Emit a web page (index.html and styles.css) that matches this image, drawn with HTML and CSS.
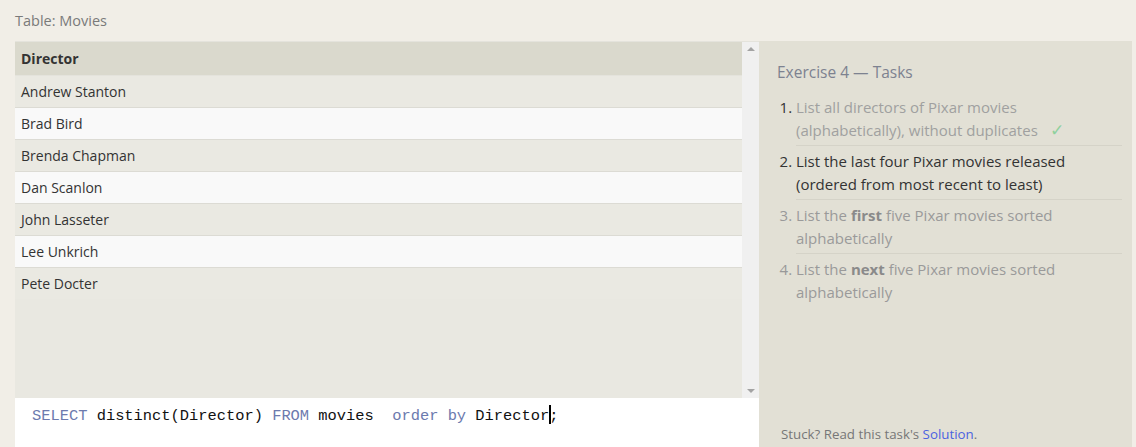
FILE: index.html
```html
<!DOCTYPE html>
<html>
<head>
<meta charset="utf-8">
<link rel="stylesheet" href="styles.css">
</head>
<body>
<div class="page">
  <div class="caption">Table: Movies</div>
  <div class="main">
    <div class="left">
      <div class="table-wrap">
        <div class="table">
          <div class="row head">Director</div>
          <div class="row odd">Andrew Stanton</div>
          <div class="row even">Brad Bird</div>
          <div class="row odd">Brenda Chapman</div>
          <div class="row even">Dan Scanlon</div>
          <div class="row odd">John Lasseter</div>
          <div class="row even">Lee Unkrich</div>
          <div class="row odd">Pete Docter</div>
        </div>
        <div class="scrollbar">
          <span class="arrow up"></span>
          <span class="arrow down"></span>
        </div>
      </div>
      <div class="editor"><span class="kw">SELECT</span> distinct(Director) <span class="kw">FROM</span> movies  <span class="kw">order by</span> Director<span class="cursor"></span>;</div>
    </div>
    <div class="tasks">
      <div class="tasks-title">Exercise 4 — Tasks</div>
      <ol class="task-list">
        <li class="done">List all directors of Pixar movies (alphabetically), without duplicates <span class="check">✓</span></li>
        <li class="current">List the last four Pixar movies released (ordered from most recent to least)</li>
        <li class="todo">List the <b>first</b> five Pixar movies sorted alphabetically</li>
        <li class="todo last">List the <b>next</b> five Pixar movies sorted alphabetically</li>
      </ol>
      <div class="stuck">Stuck? Read this task's <a class="solution">Solution</a>.</div>
    </div>
  </div>
</div>
</body>
</html>
```

FILE: styles.css
```css
html, body {
  margin: 0;
  padding: 0;
  background: #f1eee7;
  font-family: "Open Sans", "Noto Sans", sans-serif;
}
.page {
  width: 1136px;
  height: 447px;
  overflow: hidden;
}
.caption {
  padding: 10px 0 0 15px;
  height: 41px;
  box-sizing: border-box;
  font-size: 14.5px;
  color: #7a7a7a;
  line-height: 22px;
}
.main {
  display: flex;
  margin-left: 15px;
  margin-right: 4px;
  height: 406px;
}
.left {
  width: 744px;
  display: flex;
  flex-direction: column;
  background: #e9e8e1;
}
.table-wrap {
  display: flex;
  height: 356px;
  border-top: 1px solid #e4e3dc;
}
.table {
  flex: 1;
  background: #e9e8e1;
}
.row {
  height: 31px;
  border-bottom: 1px solid #dcdbd4;
  padding-left: 6px;
  font-size: 14px;
  line-height: 31px;
  color: #333;
}
.row:last-child { border-bottom: none; }
.row.head {
  height: 33px;
  line-height: 33px;
  background: #dad9cd;
  font-weight: 700;
  color: #333;
  border-bottom: 1px solid #e4e3dc;
}
.row.odd { background: #eae9e2; }
.row.even { background: #f9f9f9; }
.scrollbar {
  width: 17px;
  background: #f0f0f0;
  display: flex;
  flex-direction: column;
  justify-content: space-between;
  align-items: center;
  padding: 5px 0;
  box-sizing: border-box;
}
.arrow {
  width: 0;
  height: 0;
  border-left: 4px solid transparent;
  border-right: 4px solid transparent;
}
.arrow.up { border-bottom: 4px solid #a3a3a3; }
.arrow.down { border-top: 4px solid #a3a3a3; }
.editor {
  flex: 1;
  background: #fff;
  padding: 7px 0 0 17px;
  font-family: "Liberation Mono", "DejaVu Sans Mono", monospace;
  font-size: 15.4px;
  line-height: 22px;
  color: #111;
  white-space: pre;
}
.kw { color: #6c7aae; }
.cursor {
  display: inline-block;
  width: 2px;
  height: 19px;
  background: #000;
  vertical-align: -4px;
  margin-right: -2px;
}
.tasks {
  flex: 1;
  background: #e2e0d5;
  display: flex;
  flex-direction: column;
  padding: 19px 10px 0 18px;
}
.tasks-title {
  font-size: 15.5px;
  color: #7d8290;
  line-height: 24px;
}
.task-list {
  margin: 12px 0 0 0;
  padding: 0 0 0 19px;
  font-size: 15px;
  line-height: 23px;
  color: #999;
}
.task-list li {
  padding: 0 0 3px 0;
  margin-bottom: 4px;
  border-bottom: 1px solid #d5d3c8;
}
.task-list li::marker { color: #333; }
.task-list li.todo::marker { color: #999; }
.task-list li.last { border-bottom: none; }
.task-list li.done { color: #a0a0a0; }
.task-list li.current { color: #333; }
.task-list li.todo { color: #9a9a9a; }
.task-list li.todo b { color: #8a8a8a; }
.check {
  color: #8fd19e;
  margin-left: 8px;
  font-size: 17px;
  line-height: 20px;
}
.stuck {
  margin-top: auto;
  padding: 0 0 3px 4px;
  font-size: 13.3px;
  line-height: 20px;
  color: #777;
}
.solution { color: #4b63e0; }
```
